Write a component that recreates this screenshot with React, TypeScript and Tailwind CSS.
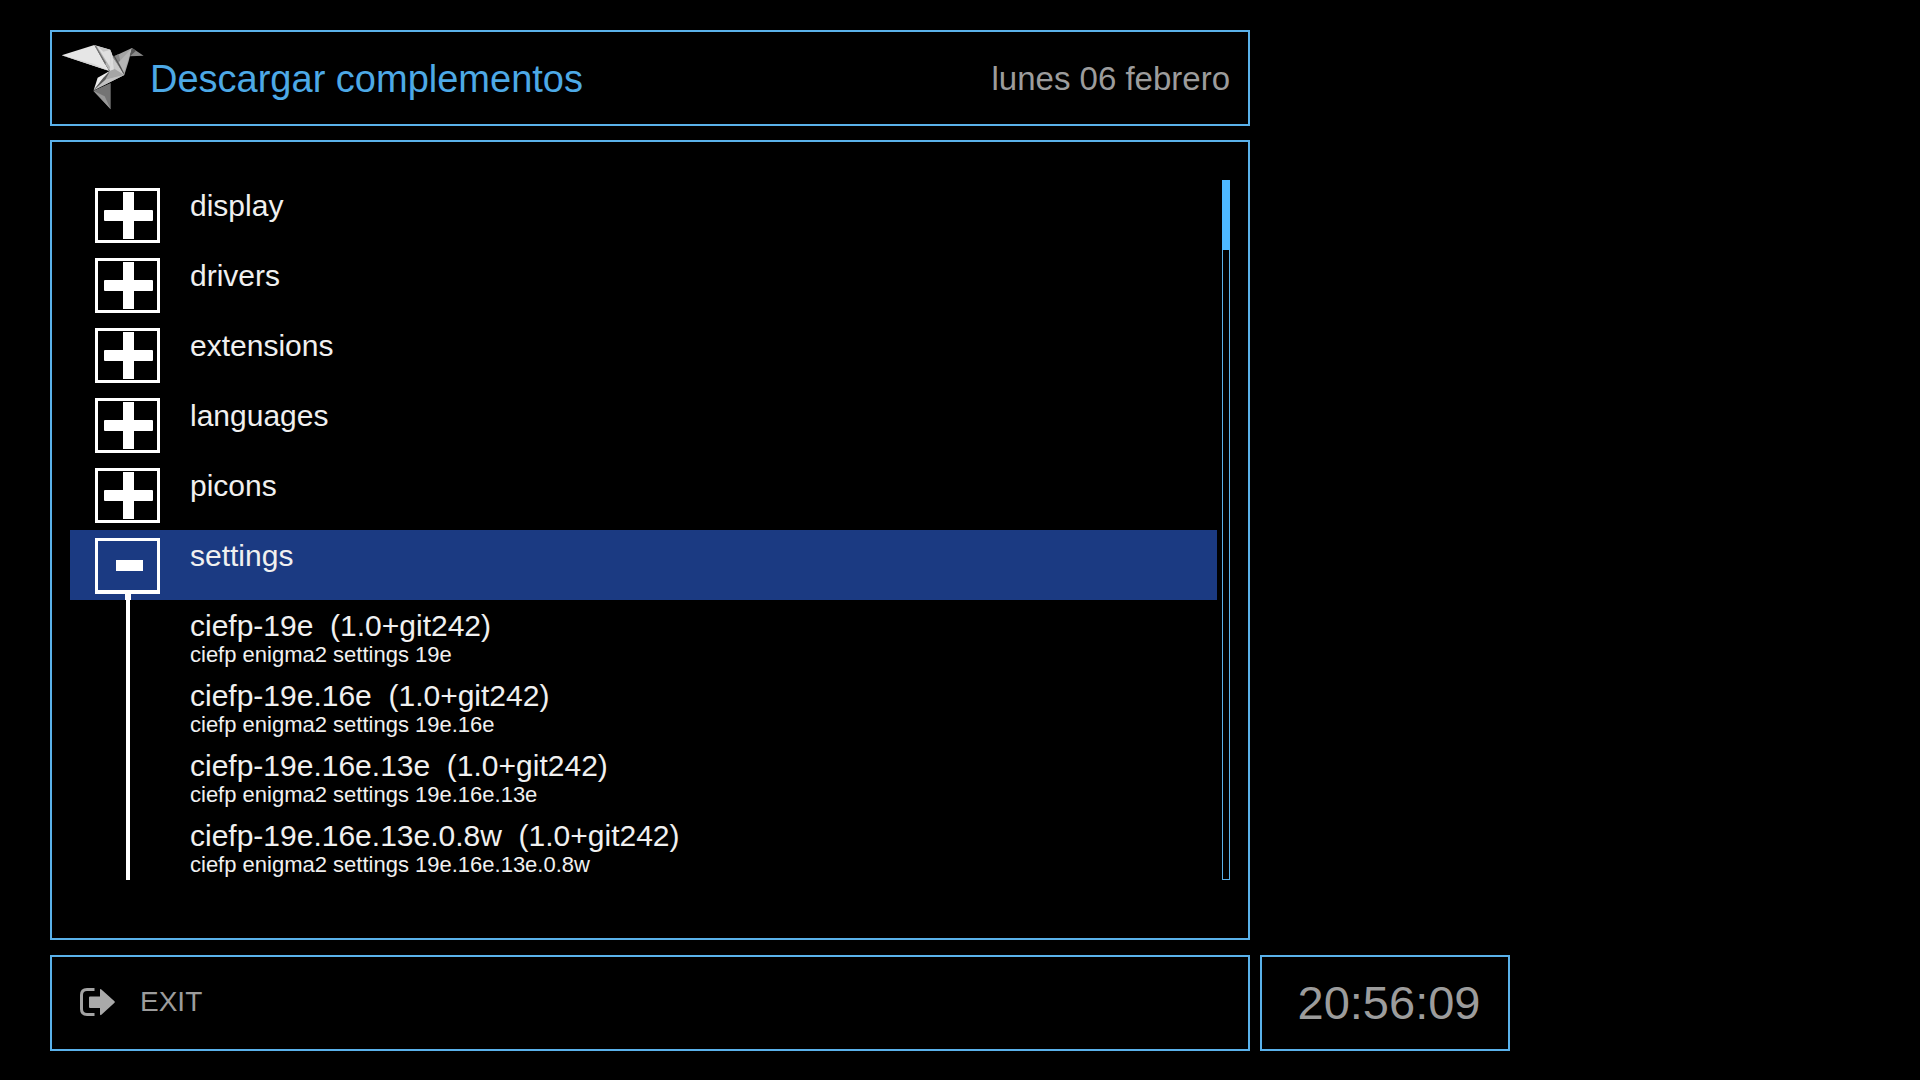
import { useState } from "react";
import clsx from "clsx";

type Category = {
  name: string;
  packages?: Package[];
};

type Package = {
  name: string;
  version: string;
  description: string;
};

const categories: Category[] = [
  { name: "display" },
  { name: "drivers" },
  { name: "extensions" },
  { name: "languages" },
  { name: "picons" },
  {
    name: "settings",
    packages: [
      { name: "ciefp-19e", version: "1.0+git242", description: "ciefp enigma2 settings 19e" },
      { name: "ciefp-19e.16e", version: "1.0+git242", description: "ciefp enigma2 settings 19e.16e" },
      { name: "ciefp-19e.16e.13e", version: "1.0+git242", description: "ciefp enigma2 settings 19e.16e.13e" },
      { name: "ciefp-19e.16e.13e.0.8w", version: "1.0+git242", description: "ciefp enigma2 settings 19e.16e.13e.0.8w" },
    ],
  },
];

const BirdLogo = () => (
  <svg viewBox="30 27 255 204" className="h-[68px] w-[85px] shrink-0" aria-hidden="true">
    {/* left wing */}
    <polygon points="35,61 133,30 166,88 178,108" fill="#e6e6e6" />
    <polygon points="35,61 130,86 178,108" fill="#d4d4d4" />
    <polygon points="133,30 181,44 188,70 180,108" fill="#e0e0e0" />
    <polygon points="133,30 141,34 180,96 178,108" fill="#b4b4b4" />
    <polygon points="133,30 138,33 168,84 165,88" fill="#6c6c6c" />
    <polygon points="143,34 181,44 160,50" fill="#c8c8c8" />
    {/* body */}
    <polygon points="181,44 189,66 223,120 131,166 179,108" fill="#bcbcbc" />
    <polygon points="181,44 189,66 192,106 180,108" fill="#dcdcdc" />
    <polygon points="188,66 223,120 194,104" fill="#cacaca" />
    <polygon points="179,108 194,102 223,120 166,134" fill="#a6a6a6" />
    <polygon points="166,134 223,120 131,166" fill="#c2c2c2" />
    <polygon points="179,108 143,128 131,166" fill="#ececec" />
    <polygon points="179,110 160,128 131,166 166,134" fill="#5a5a5a" />
    {/* neck and head */}
    <polygon points="188,66 246,39 236,78 223,120" fill="#a4a4a4" />
    <polygon points="188,66 206,57 218,108" fill="#848484" />
    <polygon points="206,82 246,39 222,112" fill="#b6b6b6" />
    <polygon points="190,62 194,62 222,114 220,116" fill="#4c4c4c" />
    <polygon points="246,39 281,62 240,64" fill="#8a8a8a" />
    <polygon points="246,39 258,47 240,64" fill="#565656" />
    {/* tail */}
    <polygon points="130,167 182,144 182,223" fill="#747474" />
    <polygon points="130,167 164,184 182,223" fill="#989898" />
  </svg>
);

const ToggleIcon = ({ open }: { open: boolean }) => (
  <svg viewBox="0 0 65 62" className="h-[62px] w-[65px] shrink-0" aria-hidden="true">
    {open ? (
      <>
        <path d="M0 0H65V56H0ZM3 3V52H62V3Z" fill="#fff" fillRule="evenodd" />
        <rect x="21" y="22" width="27" height="11" fill="#fff" />
        <rect x="30" y="56" width="6" height="6" fill="#fff" />
      </>
    ) : (
      <>
        <path d="M0 0H65V55H0ZM3 3V52H62V3Z" fill="#fff" fillRule="evenodd" />
        <rect x="9" y="22" width="49" height="11" rx="1" fill="#fff" />
        <rect x="28" y="4" width="11" height="47" fill="#fff" />
      </>
    )}
  </svg>
);

const ExitIcon = () => (
  <svg viewBox="0 0 36 28" className="h-7 w-9 shrink-0" aria-hidden="true">
    <path d="M14.5 1.5H7Q1.5 1.5 1.5 7V21Q1.5 26.5 7 26.5H14.5" fill="none" stroke="#a3a3a3" strokeWidth="3" />
    <path d="M10 8.5H20V2Q20 0.4 21.4 1.4L34.5 13.2Q35.3 14 34.5 14.8L21.4 26.8Q20 27.8 20 26V20H10Q9 20 9 19V9.5Q9 8.5 10 8.5Z" fill="#a9a9a9" />
  </svg>
);

const CategoryRow = ({
  category,
  open,
  onToggle,
}: {
  category: Category;
  open: boolean;
  onToggle: () => void;
}) => (
  <li>
    <button
      type="button"
      aria-expanded={open}
      onClick={onToggle}
      className={clsx("flex h-[70px] w-full items-start gap-[30px] pl-[25px] text-left", open && "bg-[#1b3a82]")}
    >
      <span className="pt-2">
        <ToggleIcon open={open} />
      </span>
      <span className="pt-2.5 text-[30px] leading-8">{category.name}</span>
    </button>

    {open && category.packages && (
      <ul className="ml-14 border-l-4 border-white">
        {category.packages.map((pkg) => (
          <li key={pkg.name}>
            <button type="button" className="block h-[70px] w-full pt-2.5 pl-[60px] text-left align-top">
              <span className="block h-8 text-[30px] leading-8 whitespace-pre">
                {`${pkg.name}  (${pkg.version})`}
              </span>
              <span className="block h-7 text-[22px] leading-[26px]">{pkg.description}</span>
            </button>
          </li>
        ))}
      </ul>
    )}
  </li>
);

const App = () => {
  const [openCategory, setOpenCategory] = useState("settings");

  return (
    <div className="min-h-screen bg-black px-[50px] pt-[30px] pb-7 font-['Liberation_Sans',Arial,sans-serif] text-[#f0f0f0]">
      <div className="grid grid-cols-[24fr_5fr_7fr] gap-x-2.5">
        {/* Header */}
        <header className="flex h-24 items-center justify-between border-2 border-[#5ab1ea] pr-[18px] pl-2">
          <div className="flex items-center gap-[5px]">
            <BirdLogo />
            <h1 className="pt-0.5 text-[38px] text-[#4da9e6]">Descargar complementos</h1>
          </div>
          <time className="pt-0.5 text-[33px] text-[#9c9c9c]">lunes 06 febrero</time>
        </header>

        {/* Package list */}
        <main className="col-start-1 mt-3.5 flex gap-[5px] border-2 border-[#5ab1ea] px-[18px] pt-[38px] pb-[58px]">
          <ul className="flex-1">
            {categories.map((category) => (
              <CategoryRow
                key={category.name}
                category={category}
                open={category.name === openCategory}
                onToggle={() => setOpenCategory(category.name === openCategory ? "" : category.name)}
              />
            ))}
          </ul>
          <div className="w-2 border border-[#5ab1ea]">
            <div className="-mx-px -mt-px h-[70px] bg-[#4db8ff]" />
          </div>
        </main>

        {/* Footer */}
        <footer className="col-start-1 mt-[15px] flex h-24 items-center border-2 border-[#5ab1ea] pl-7">
          <button type="button" className="flex items-center gap-6 pb-0.5 text-[28px] text-[#9c9c9c]">
            <ExitIcon />
            EXIT
          </button>
        </footer>
        <div className="mt-[15px] flex h-24 items-center justify-center border-2 border-[#5ab1ea] pl-2">
          <time className="text-[47px] text-[#9c9c9c]">20:56:09</time>
        </div>
      </div>
    </div>
  );
};

export default App;
